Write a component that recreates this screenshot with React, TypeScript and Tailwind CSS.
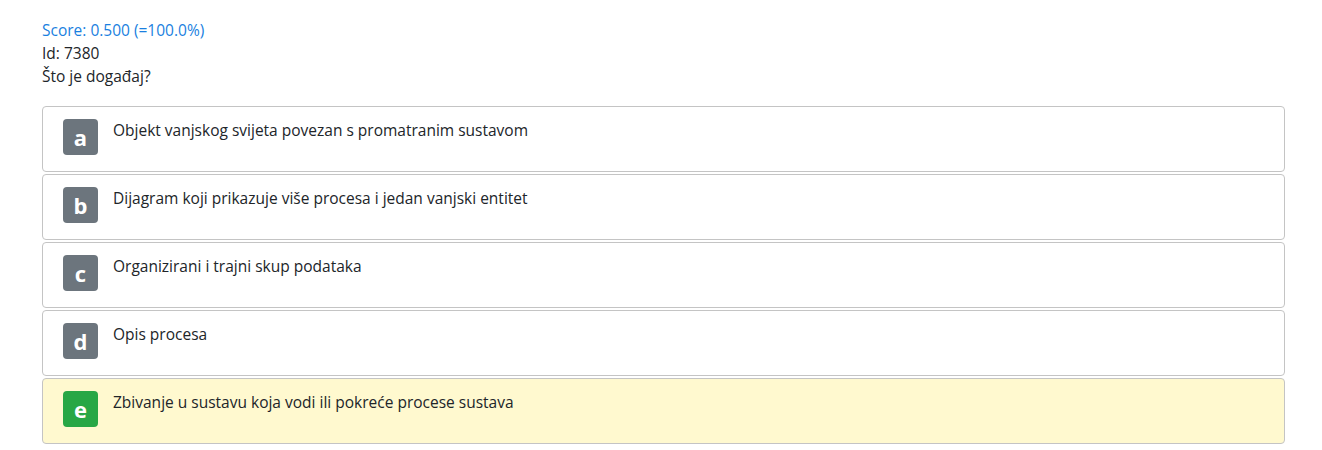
import React from 'react';

const answers = [
  { key: 'a', text: 'Objekt vanjskog svijeta povezan s promatranim sustavom', correct: false },
  { key: 'b', text: 'Dijagram koji prikazuje više procesa i jedan vanjski entitet', correct: false },
  { key: 'c', text: 'Organizirani i trajni skup podataka', correct: false },
  { key: 'd', text: 'Opis procesa', correct: false },
  { key: 'e', text: 'Zbivanje u sustavu koja vodi ili pokreće procese sustava', correct: true },
];

export default function App() {
  return (
    <div
      className="min-h-[450px] bg-white px-[42px] pt-[19px] text-[#212529]"
      style={{ fontFamily: '"Open Sans", Lato, sans-serif' }}
    >
      <div className="text-[15.5px] leading-[23px]">
        <div className="text-[#1a7fe0]">Score: 0.500 (=100.0%)</div>
        <div>Id: 7380</div>
        <div>Što je događaj?</div>
      </div>
      <div className="mt-[18px] w-[1243px]">
        {answers.map((a) => (
          <div
            key={a.key}
            className={`mb-[2px] flex h-[66px] items-start gap-[15px] rounded border border-[#c4c4c4] pl-[20px] pt-[12px] ${
              a.correct ? 'bg-[#fff9cf]' : 'bg-white'
            }`}
          >
            <div
              className={`flex h-[36px] w-[35px] shrink-0 items-center justify-center rounded-[4px] text-[22px] font-bold text-white ${
                a.correct ? 'bg-[#28a745]' : 'bg-[#6c757d]'
              }`}
            >
              {a.key}
            </div>
            <div className="text-[15.5px] leading-[22px]">{a.text}</div>
          </div>
        ))}
      </div>
    </div>
  );
}
